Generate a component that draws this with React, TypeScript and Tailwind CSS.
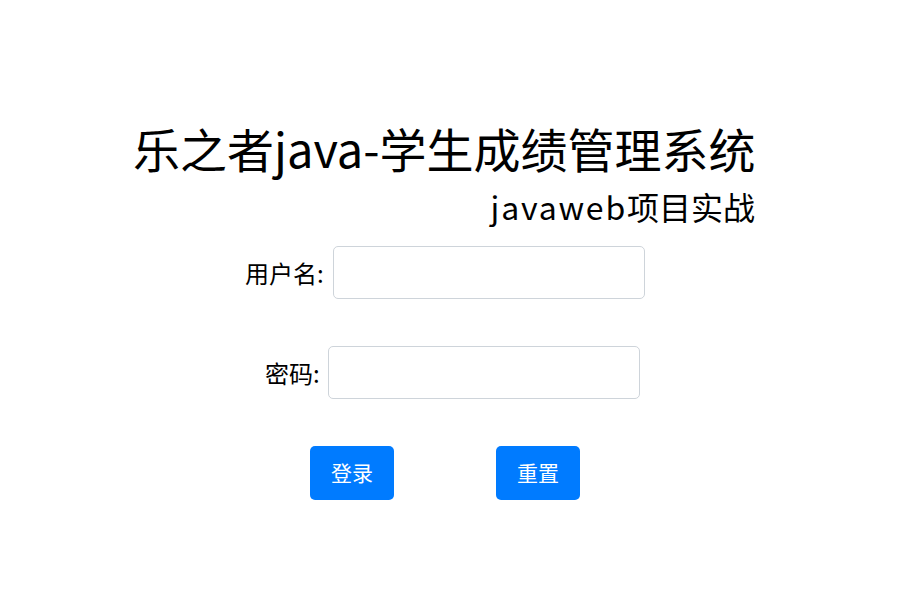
export default function App() {
  return (
    <div
      className="min-h-[602px] w-full bg-white text-black"
      style={{ fontFamily: '"Noto Sans CJK SC", "Noto Sans", sans-serif' }}
    >
      <div className="pt-[120px]">
        <div className="ml-[133px] w-[624px]">
          <h1 className="text-[47px] leading-[56px] font-normal whitespace-nowrap">乐之者java-学生成绩管理系统</h1>
          <h3 className="text-right text-[32px] leading-[40px] font-normal whitespace-nowrap mt-[10px] mr-[2px]">
            <span className="tracking-[1.8px]">javaweb</span>项目实战
          </h3>
        </div>
      </div>

      <div className="flex items-center pl-[245px] mt-[20px]">
        <label className="text-[24px] leading-[30px] mr-[9px]">用户名:</label>
        <input className="w-[312px] h-[53px] border border-[#ced4da] rounded-[5px] outline-none px-3" />
      </div>

      <div className="flex items-center pl-[265px] mt-[47px]">
        <label className="text-[24px] leading-[30px] mr-[8px]">密码:</label>
        <input type="password" className="w-[312px] h-[53px] border border-[#ced4da] rounded-[5px] outline-none px-3" />
      </div>

      <div className="flex pl-[310px] gap-[102px] mt-[47px]">
        <button className="w-[84px] h-[54px] rounded-[5px] bg-[#007bff] text-white text-[21px]">登录</button>
        <button className="w-[84px] h-[54px] rounded-[5px] bg-[#007bff] text-white text-[21px]">重置</button>
      </div>
    </div>
  );
}
